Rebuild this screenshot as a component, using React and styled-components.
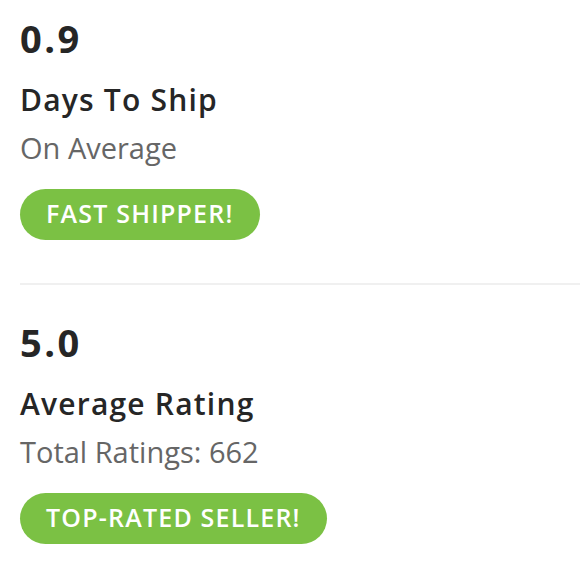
import React from 'react';
import styled, { createGlobalStyle } from 'styled-components';

const GlobalStyle = createGlobalStyle`
    html, body {
        margin: 0;
        padding: 0;
        background: #ffffff;
    }
    body {
        font-family: 'Open Sans', 'Noto Sans', sans-serif;
        -webkit-font-smoothing: antialiased;
    }
`

const Wrapper = styled.div`
    display: flex;
    flex-direction: column;
    padding-left: 20px;
    width: 560px;
`

const Section = styled.section`
    display: flex;
    flex-direction: column;
    align-items: flex-start;
    padding-top: ${props => props.first ? '18px' : '37px'};
    padding-bottom: 43px;
    border-bottom: ${props => props.last ? 'none' : '2px solid #f0f0f0'};
`

const Value = styled.div`
    font-size: 38px;
    line-height: 40px;
    font-weight: 700;
    letter-spacing: 2.5px;
    color: #262626;
`

const Label = styled.div`
    margin-top: 24px;
    font-size: 30px;
    line-height: 36px;
    font-weight: 600;
    letter-spacing: 1.2px;
    color: #262626;
`

const Sub = styled.div`
    margin-top: 12px;
    font-size: 29px;
    line-height: 36px;
    font-weight: 400;
    color: #666666;
`

const Badge = styled.div`
    margin-top: 23px;
    height: 51px;
    box-sizing: border-box;
    padding: 0 26px 3px;
    display: flex;
    align-items: center;
    border-radius: 26px;
    background: #7bc144;
    color: #ffffff;
    font-size: 25px;
    font-weight: 600;
    letter-spacing: 1.2px;
`

const stats = [
    { value: '0.9', label: 'Days To Ship', sub: 'On Average', badge: 'FAST SHIPPER!' },
    { value: '5.0', label: 'Average Rating', sub: 'Total Ratings: 662', badge: 'TOP-RATED SELLER!' },
]

export default function App() {
    return (
        <>
            <GlobalStyle />
            <Wrapper>
                {stats.map((stat, index) => (
                    <Section key={index} first={index === 0} last={index === stats.length - 1}>
                        <Value>{stat.value}</Value>
                        <Label>{stat.label}</Label>
                        <Sub>{stat.sub}</Sub>
                        <Badge>{stat.badge}</Badge>
                    </Section>
                ))}
            </Wrapper>
        </>
    );
}
